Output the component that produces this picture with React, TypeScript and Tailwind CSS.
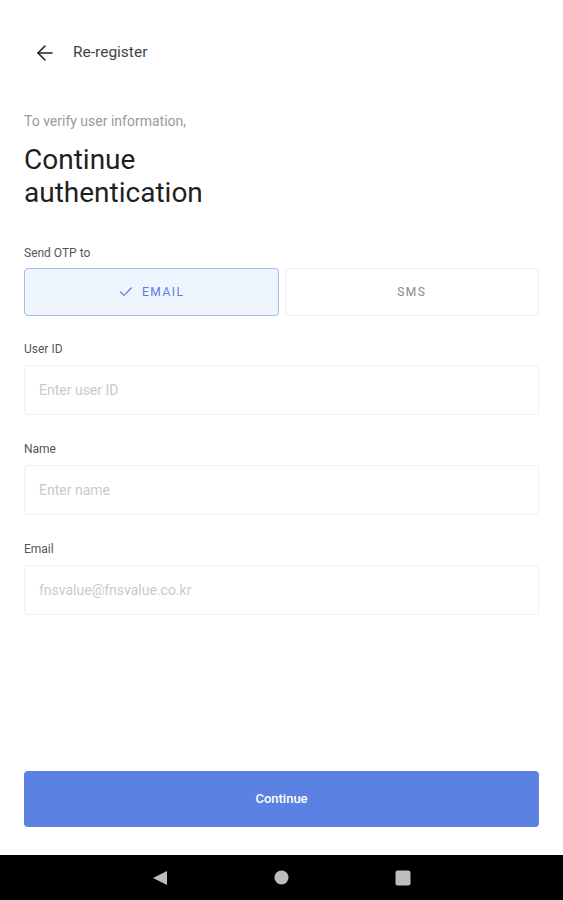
import React, { useState } from 'react';
import { ArrowLeft, Check } from 'lucide-react';

type Channel = 'email' | 'sms';

function Field({ label, placeholder }: { label: string; placeholder: string }) {
  return (
    <div className="flex flex-col">
      <label className="text-[12px] leading-4 text-[#555]">{label}</label>
      <input
        className="mt-2 h-[50px] w-full rounded-[4px] border border-[#f1f1f1] px-[14px] text-[14px] text-[#333] outline-none placeholder:text-[#cacaca]"
        placeholder={placeholder}
      />
    </div>
  );
}

export default function App() {
  const [channel, setChannel] = useState<Channel>('email');

  const on =
    'flex h-12 items-center justify-center gap-2 rounded-[4px] border border-[#a8b9ee] bg-[#eef5ff] text-[12px] tracking-[1.5px] text-[#5b7fd6]';
  const off =
    'flex h-12 items-center justify-center gap-2 rounded-[4px] border border-[#f0f0f0] bg-white text-[12px] tracking-[1.5px] text-[#8a8a8a]';

  return (
    <div
      className="flex h-[900px] w-full flex-col bg-white"
      style={{ fontFamily: 'Roboto, "Noto Sans", sans-serif' }}
    >
      <div className="flex flex-1 flex-col">
        <div className="mt-[41px] flex h-6 items-center gap-4 pl-[33px]">
          <ArrowLeft size={24} strokeWidth={1.6} className="text-[#222]" />
          <span className="text-[15.5px] text-[#444]">Re-register</span>
        </div>

        <div className="px-6">
          <p className="mt-[47px] text-[14px] leading-[18px] text-[#9a9a9a]">To verify user information,</p>
          <h1 className="mt-[13px] text-[28px] leading-[33px] text-[#1f1f1f]">
            Continue
            <br />
            authentication
          </h1>

          <p className="mt-[36px] text-[12px] leading-4 text-[#555]">Send OTP to</p>
          <div className="mt-[7px] grid grid-cols-2 gap-[6px]">
            <button onClick={() => setChannel('email')} className={channel === 'email' ? on : off}>
              {channel === 'email' && <Check size={16} strokeWidth={1.8} />}
              EMAIL
            </button>
            <button onClick={() => setChannel('sms')} className={channel === 'sms' ? on : off}>
              {channel === 'sms' && <Check size={16} strokeWidth={1.8} />}
              SMS
            </button>
          </div>

          <div className="mt-[25px] flex flex-col gap-[26px]">
            <Field label="User ID" placeholder="Enter user ID" />
            <Field label="Name" placeholder="Enter name" />
            <Field label="Email" placeholder="fnsvalue@fnsvalue.co.kr" />
          </div>
        </div>
      </div>

      <div className="px-6 pb-[28px]">
        <button className="h-14 w-full rounded-[4px] bg-[#5b81e2] text-[13px] font-medium text-white">
          Continue
        </button>
      </div>

      <div className="flex h-[45px] items-center justify-center gap-[106px] bg-black">
        <svg width="16" height="16" viewBox="0 0 16 16">
          <path d="M15 1 L15 15 L1 8 Z" fill="#bdbdbd" />
        </svg>
        <svg width="15" height="15" viewBox="0 0 15 15">
          <circle cx="7.5" cy="7.5" r="7" fill="#bdbdbd" />
        </svg>
        <svg width="16" height="16" viewBox="0 0 16 16">
          <rect x="0.5" y="0.5" width="15" height="15" rx="2" fill="#bdbdbd" />
        </svg>
      </div>
    </div>
  );
}
